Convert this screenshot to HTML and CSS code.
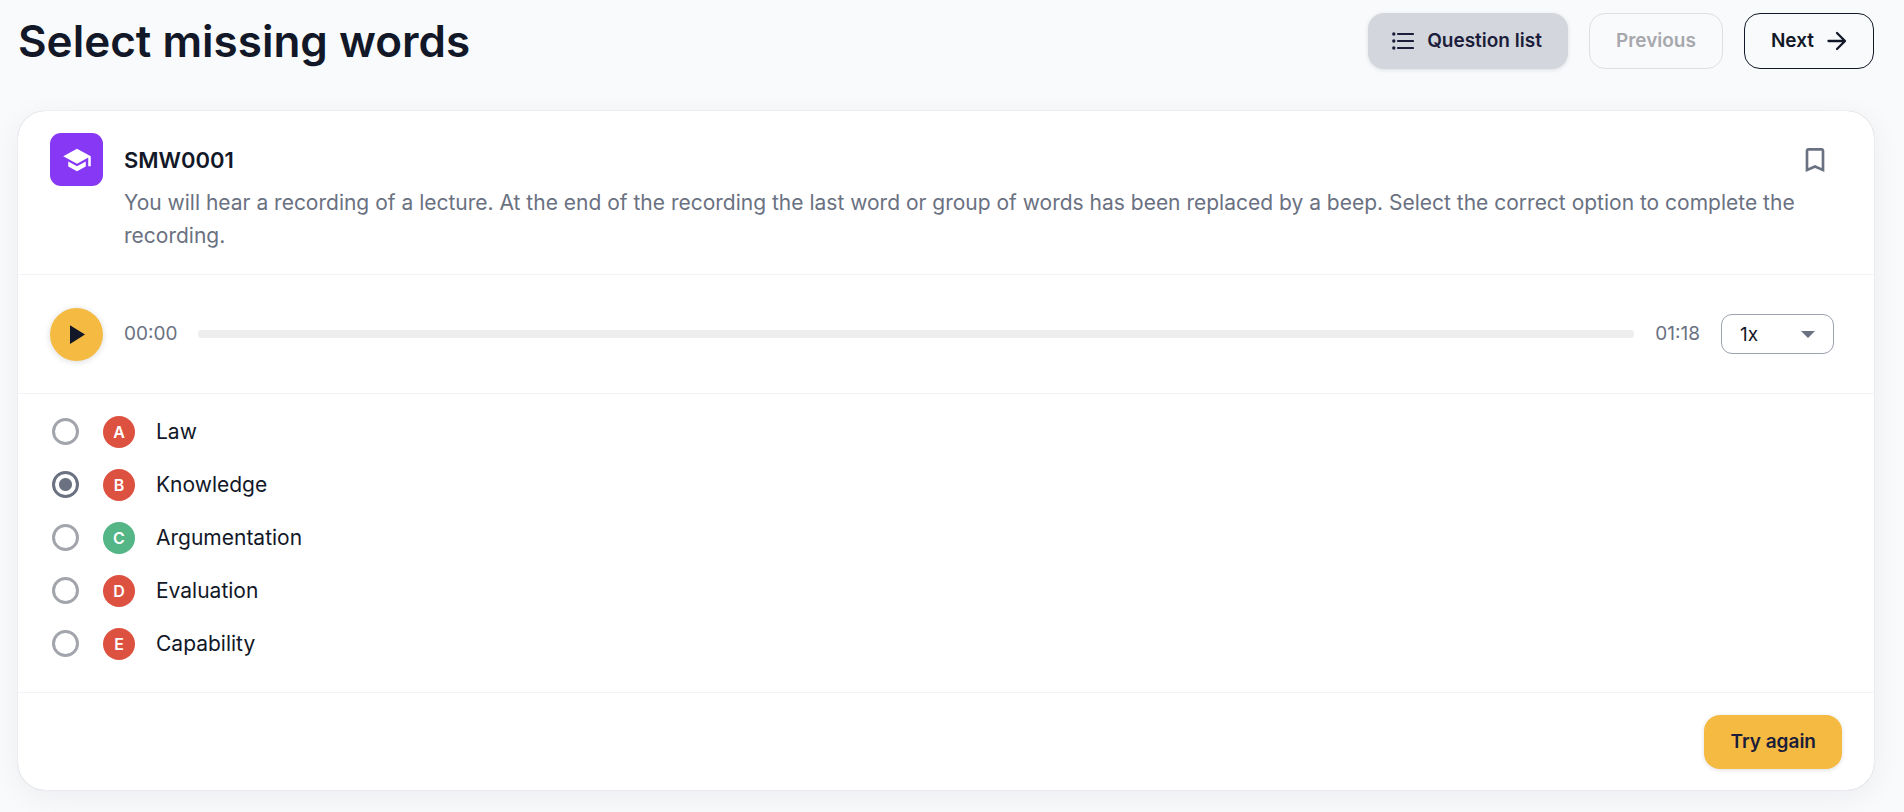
FILE: index.html
```html
<!DOCTYPE html>
<html lang="en">
<head>
<meta charset="utf-8">
<meta name="viewport" content="width=device-width, initial-scale=1">
<title>Select missing words</title>
<link rel="stylesheet" href="styles.css">
</head>
<body>
<main class="page">
  <header class="topbar">
    <h1 class="title">Select missing words</h1>
    <nav class="actions" aria-label="Question navigation">
      <button class="btn btn-list" type="button">
        <svg class="icon-list" viewBox="0 0 22 18" aria-hidden="true"><path d="M6 2h15M6 9h15M6 16h15" fill="none" stroke="currentColor" stroke-width="2.2" stroke-linecap="round"/><circle cx="1.8" cy="2" r="1.7" fill="currentColor"/><circle cx="1.8" cy="9" r="1.7" fill="currentColor"/><circle cx="1.8" cy="16" r="1.7" fill="currentColor"/></svg>
        Question list
      </button>
      <button class="btn btn-outline" type="button" disabled>Previous</button>
      <button class="btn btn-outline btn-next" type="button">
        Next
        <svg class="icon-arrow" viewBox="0 0 20 20" aria-hidden="true"><path d="M1.5 10h16M10 2l8 8-8 8" fill="none" stroke="currentColor" stroke-width="2.3" stroke-linecap="round" stroke-linejoin="round"/></svg>
      </button>
    </nav>
  </header>

  <section class="card" aria-labelledby="code">
    <div class="intro">
      <span class="badge-icon"><svg viewBox="0 0 24 24" aria-hidden="true"><path fill="currentColor" d="M5 13.18v4L12 21l7-3.82v-4L12 17l-7-3.82zM12 3L1 9l11 6 9-4.91V17h2V9L12 3z"/></svg></span>
      <div class="intro-body">
        <div class="intro-head">
          <h2 class="code" id="code">SMW0001</h2>
          <button class="bookmark" type="button" aria-label="Bookmark"><svg viewBox="0 0 24 24" aria-hidden="true"><path fill="currentColor" d="M17 3H7c-1.1 0-2 .9-2 2v16l7-3 7 3V5c0-1.1-.9-2-2-2zm0 15l-5-2.18L7 18V5h10v13z"/></svg></button>
        </div>
        <p class="description">You will hear a recording of a lecture. At the end of the recording the last word or group of words has been replaced by a beep. Select the correct option to complete the recording.</p>
      </div>
    </div>

    <div class="player">
      <button class="play" type="button" aria-label="Play"><svg viewBox="0 0 16 20" aria-hidden="true"><path d="M0 0l16 10L0 20z" fill="currentColor"/></svg></button>
      <span class="time">00:00</span>
      <div class="track" role="progressbar" aria-label="Playback position" aria-valuemin="0" aria-valuemax="78" aria-valuenow="0"></div>
      <span class="time">01:18</span>
      <div class="speed">
        <select class="speed-select" aria-label="Playback speed"><option>1x</option></select>
        <svg class="speed-caret" viewBox="0 0 14 8" aria-hidden="true"><path d="M0 0h14L7 7z" fill="currentColor"/></svg>
      </div>
    </div>

    <div class="options" role="radiogroup" aria-label="Answers">
      <label class="option"><input class="radio" type="radio" name="answer"><span class="letter">A</span><span>Law</span></label>
      <label class="option"><input class="radio" type="radio" name="answer" checked><span class="letter">B</span><span>Knowledge</span></label>
      <label class="option"><input class="radio" type="radio" name="answer"><span class="letter letter-right">C</span><span>Argumentation</span></label>
      <label class="option"><input class="radio" type="radio" name="answer"><span class="letter">D</span><span>Evaluation</span></label>
      <label class="option"><input class="radio" type="radio" name="answer"><span class="letter">E</span><span>Capability</span></label>
    </div>

    <footer class="card-footer">
      <button class="btn btn-primary" type="button">Try again</button>
    </footer>
  </section>
</main>
</body>
</html>
```

FILE: styles.css
```css
* { box-sizing: border-box; }

body {
  margin: 0;
  background: #f9fafc;
  color: #121828;
  font-family: Inter, "Liberation Sans", sans-serif;
}

button, select, input { font: inherit; color: inherit; margin: 0; }

.page { padding: 13px 30px 22px 18px; }

.topbar {
  display: flex;
  align-items: center;
  justify-content: space-between;
  height: 56px;
}

.title {
  margin: 0;
  font-size: 44px;
  font-weight: 600;
  line-height: 56px;
}

.actions { display: flex; gap: 21px; }

.btn {
  display: flex;
  align-items: center;
  justify-content: center;
  height: 56px;
  padding: 0 26px;
  border: 0;
  border-radius: 16px;
  background: transparent;
  font-size: 19px;
  font-weight: 600;
  line-height: 32px;
}

.btn-list {
  gap: 13px;
  padding-left: 24px;
  background: #d3d6dc;
  color: #1c1d3a;
  box-shadow: 0 1px 4px rgba(18, 24, 40, .12);
}

.btn-outline { border: 1px solid #121828; }
.btn-outline:disabled { border-color: #dfe0e3; color: #a6a8ad; }
.btn-next { gap: 13px; }
.icon-list { width: 22px; height: 18px; }
.icon-arrow { width: 20px; height: 20px; }

.card {
  margin-top: 42px;
  border-radius: 27px;
  background: #fff;
  box-shadow: 0 0 1px rgba(18, 24, 40, .3), 0 6px 30px rgba(18, 24, 40, .06);
}

.intro {
  display: flex;
  gap: 21px;
  padding: 22px 32px;
}

.badge-icon {
  flex: none;
  display: grid;
  place-items: center;
  width: 53px;
  height: 53px;
  border-radius: 11px;
  background: #8738f5;
  color: #fff;
}
.badge-icon svg { width: 30px; height: 30px; }

.intro-body { flex: 1; min-width: 0; }
.intro-head {
  display: flex;
  align-items: center;
  justify-content: space-between;
  height: 53px;
}
.code { margin: 0; font-size: 22px; font-weight: 600; line-height: 32px; }

.bookmark {
  margin-right: 11px;
  padding: 0;
  border: 0;
  background: none;
  color: #6a7181;
}
.bookmark svg { display: block; width: 32px; height: 32px; }

.description {
  margin: 0;
  color: #6a7181;
  font-size: 21px;
  line-height: 33px;
}

.player {
  display: flex;
  align-items: center;
  gap: 21px;
  height: 119px;
  padding: 0 40px 0 32px;
  border-top: 1px solid #f2f3f6;
}
.play {
  flex: none;
  display: grid;
  place-items: center;
  width: 53px;
  height: 53px;
  padding: 0 0 0 2px;
  border: 0;
  border-radius: 50%;
  background: #f5ba41;
  box-shadow: 0 1px 6px rgba(18, 24, 40, .16);
}
.play svg { width: 15px; height: 19px; }
.time { color: #6a7181; font-size: 19px; line-height: 28px; }
.track { flex: 1; height: 8px; border-radius: 3px; background: #eee; }

.speed { position: relative; }
.speed-select {
  display: block;
  width: 113px;
  height: 40px;
  padding: 0 18px;
  appearance: none;
  border: 1px solid #9ca3af;
  border-radius: 11px;
  background: #fff;
  font-size: 19px;
}
.speed-caret {
  position: absolute;
  top: 17px;
  right: 19px;
  width: 14px;
  height: 8px;
  color: #6a7181;
  pointer-events: none;
}

.options {
  padding: 11px 32px 22px;
  border-top: 1px solid #f2f3f6;
}
.option {
  display: flex;
  align-items: center;
  height: 53px;
  font-size: 21px;
  line-height: 32px;
}
.radio {
  flex: none;
  width: 27px;
  height: 27px;
  margin: 0 24px 0 2px;
  appearance: none;
  border: 3px solid #a3a5ac;
  border-radius: 50%;
}
.radio:checked {
  border-color: #6a7181;
  background: radial-gradient(circle, #6a7181 6px, transparent 7px);
}
.letter {
  flex: none;
  width: 32px;
  height: 32px;
  margin-right: 21px;
  border-radius: 50%;
  background: #dd5141;
  color: #fff;
  font-size: 16px;
  font-weight: 600;
  text-align: center;
}
.letter-right { background: #54b586; }

.card-footer {
  display: flex;
  justify-content: flex-end;
  padding: 22px 32px 21px;
  border-top: 1px solid #f2f3f6;
}
.btn-primary {
  height: 54px;
  background: #f5ba41;
  color: #1c1d3a;
  box-shadow: 0 1px 4px rgba(18, 24, 40, .14);
}
```
